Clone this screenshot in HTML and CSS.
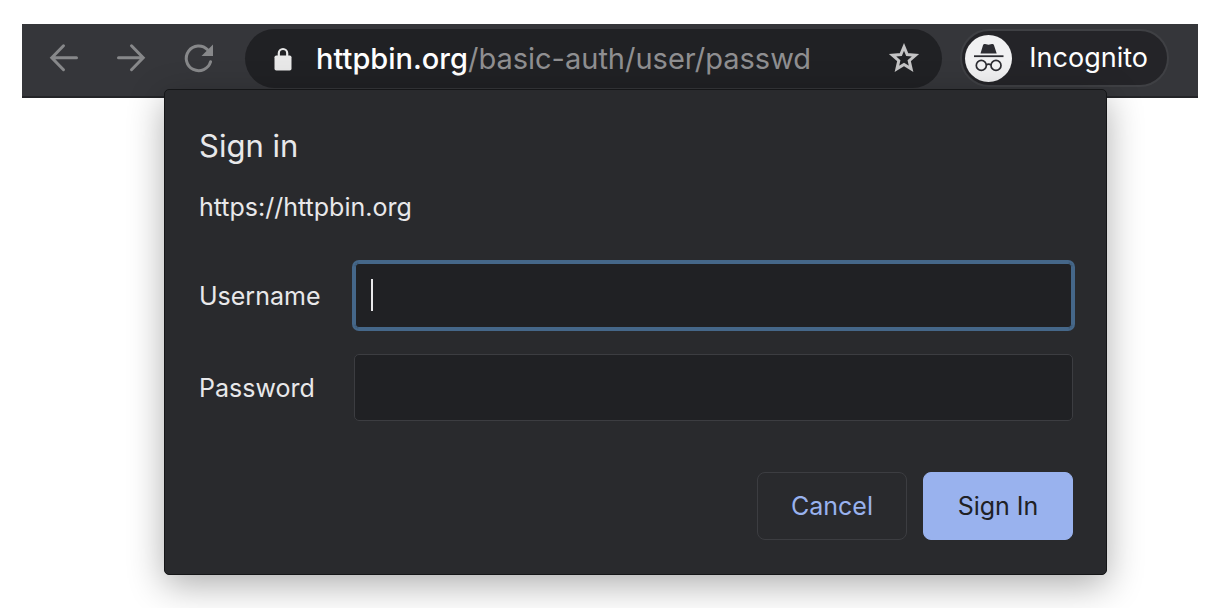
FILE: index.html
```html
<!DOCTYPE html>
<html lang="en">
<head>
<meta charset="utf-8">
<meta name="viewport" content="width=device-width, initial-scale=1">
<title>Sign in</title>
<link rel="stylesheet" href="styles.css">
</head>
<body>
<div class="browser">
  <header class="toolbar">
    <nav class="nav" aria-label="Navigation">
      <button class="icon-button" type="button" aria-label="Back">
        <svg viewBox="0 0 28 28"><path d="M26.500 13.800H2.500M13.500 1.800 1.800 13.800 13.500 25.700" fill="none" stroke="currentColor" stroke-width="3" stroke-linecap="round"/></svg>
      </button>
      <button class="icon-button" type="button" aria-label="Forward">
        <svg viewBox="0 0 28 28"><path d="M1.500 13.800H25.500M14.500 1.800 26.200 13.800 14.500 25.700" fill="none" stroke="currentColor" stroke-width="3" stroke-linecap="round"/></svg>
      </button>
      <button class="icon-button" type="button" aria-label="Reload">
        <svg viewBox="0 0 28 28"><path d="M23.600 5.700A12.400 12.400 0 1 0 26.600 17.700" fill="none" stroke="currentColor" stroke-width="3" stroke-linecap="round"/><path d="M29 .5V12H17.500Z" fill="currentColor"/></svg>
      </button>
    </nav>
    <div class="omnibox">
      <svg class="lock" viewBox="0 0 18 24" aria-hidden="true"><path d="M4.800 10V6.200a4.200 4.200 0 0 1 8.400 0V10" fill="none" stroke="currentColor" stroke-width="2.200"/><rect x=".5" y="8.500" width="17" height="15" rx="1.800" fill="currentColor"/></svg>
      <div class="url" role="textbox" aria-label="Address"><span class="host">httpbin.org</span>/basic-auth/user/passwd</div>
      <button class="star" type="button" aria-label="Bookmark this page">
        <svg viewBox="0 0 32 32"><path d="M16 3.800 19.200 11.500 27.500 12.200 21.200 17.700 23.100 25.800 16 21.500 8.900 25.800 10.800 17.700 4.500 12.200 12.800 11.500Z" fill="none" stroke="currentColor" stroke-width="3"/></svg>
      </button>
    </div>
    <button class="profile" type="button">
      <svg class="avatar" viewBox="0 0 47 47" aria-hidden="true">
        <circle cx="23.500" cy="23.500" r="23.500" fill="#f1f1f2"/>
        <path d="M15.500 18.600 18 10.200Q18.500 8.700 20 9L23.500 9.800 27 9Q28.500 8.700 29 10.200L31.700 18.600Z" fill="#2c2c31"/>
        <path d="M9 21.200H38.500" stroke="#2c2c31" stroke-width="1.800"/>
        <g fill="none" stroke="#2c2c31" stroke-width="1.700"><circle cx="16.300" cy="30.400" r="5"/><circle cx="31" cy="30.400" r="5"/><path d="M21.200 30Q23.600 28.400 26 30"/></g>
      </svg>
      <span>Incognito</span>
    </button>
  </header>

  <form class="dialog" role="dialog" aria-labelledby="title">
    <h1 class="title" id="title">Sign in</h1>
    <p class="origin">https://httpbin.org</p>
    <div class="fields">
      <label for="username">Username</label>
      <div class="field">
        <input class="input input-focused" id="username" type="text" autocomplete="off">
        <span class="caret"></span>
      </div>
      <label for="password">Password</label>
      <input class="input" id="password" type="password" autocomplete="off">
    </div>
    <div class="actions">
      <button class="button" type="button">Cancel</button>
      <button class="button button-primary" type="submit">Sign In</button>
    </div>
  </form>
</div>
</body>
</html>
```
FILE: styles.css
```css
* {
  box-sizing: border-box;
}

body {
  margin: 0;
  background: #fff;
  color: #e8e8ea;
  font: 25px/32px Inter, "Liberation Sans", sans-serif;
}

button,
input {
  font: inherit;
  color: inherit;
}

button {
  padding: 0;
  border: 0;
  background: none;
}

svg {
  display: block;
  overflow: visible;
}

.browser {
  padding: 24px 24px 34px 22px;
}

.toolbar {
  display: flex;
  align-items: flex-start;
  padding: 5px 29px 8px 28px;
  background: #35363a;
  border-bottom: 2px solid #242528;
}

.nav {
  display: flex;
  gap: 39px;
  margin: 15px 33px 0 0;
}

.icon-button {
  width: 28px;
  height: 28px;
  color: #87888a;
}

.omnibox {
  display: flex;
  flex: 1;
  align-items: center;
  height: 59px;
  margin-right: 18px;
  padding: 0 22px 0 29px;
  border-radius: 30px;
  background: #202124;
}

.lock {
  width: 18px;
  height: 24px;
  color: #e8e8e8;
}

.url {
  flex: 1;
  margin-left: 24px;
  color: #8f8f91;
  font-size: 29px;
  white-space: nowrap;
}

.host {
  color: #fff;
  font-weight: 500;
}

.star {
  width: 32px;
  height: 32px;
  color: #c4c4c5;
}

.profile {
  display: flex;
  align-items: center;
  gap: 17px;
  height: 58px;
  padding: 0 19px 0 3px;
  border: 2px solid #3f4044;
  border-radius: 29px;
  background: #242428;
  color: #fff;
  font-size: 27px;
}

.avatar {
  width: 47px;
  height: 47px;
}

.dialog {
  position: relative;
  margin: -9px 91px 0 142px;
  padding: 40px 33px 34px 34px;
  border: 1px solid #151618;
  border-radius: 5px;
  background: #292a2d;
  box-shadow: 0 10px 36px rgba(0, 0, 0, 0.32);
}

.title {
  margin: 0;
  font-size: 31px;
  font-weight: 400;
  line-height: 32px;
}

.origin {
  margin: 29px 0 39px;
}

.fields {
  display: grid;
  grid-template-columns: 155px 1fr;
  row-gap: 25px;
  align-items: center;
}

.field {
  position: relative;
}

.input {
  display: block;
  width: 100%;
  height: 67px;
  padding: 0 16px;
  border: 1px solid #3c3d41;
  border-radius: 5px;
  outline: 0;
  background: #202124;
  caret-color: transparent;
}

.input-focused {
  border-color: #456789;
  box-shadow: 0 0 0 2px #456789, inset 0 0 0 1px #456789;
}

.caret {
  position: absolute;
  top: 17px;
  left: 17px;
  width: 2px;
  height: 32px;
  background: #e8e8ea;
}

.actions {
  display: flex;
  justify-content: flex-end;
  gap: 16px;
  margin-top: 51px;
}

.button {
  width: 150px;
  height: 68px;
  border: 1px solid #3c3d41;
  border-radius: 8px;
  color: #99b2ee;
}

.button-primary {
  border-color: #99b2ee;
  background: #99b2ee;
  color: #202124;
}
```
